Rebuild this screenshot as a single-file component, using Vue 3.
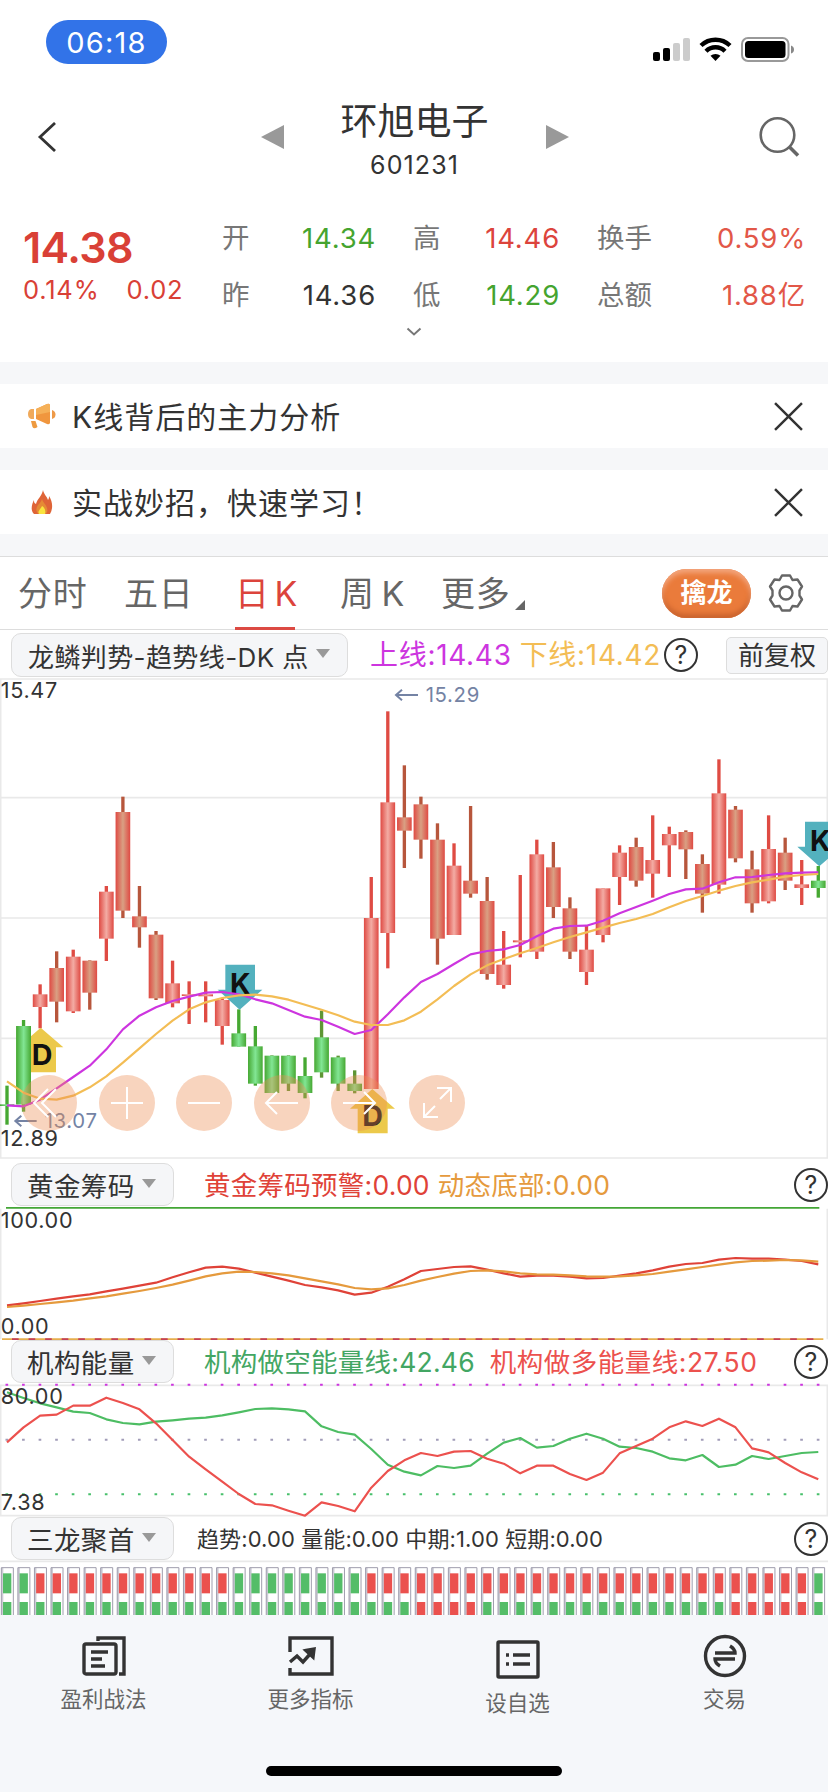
<template>
  <div class="stock-page">
    <!-- 状态栏 -->
    <div class="status-bar">
      <span class="time">06:18</span>
      <svg class="status-icons" viewBox="0 0 142 30">
        <rect x="1" y="17" width="7" height="9" rx="2" />
        <rect x="11" y="13" width="7" height="13" rx="2" />
        <rect x="21" y="8" width="7" height="18" rx="2" fill="#ccc" />
        <rect x="31" y="3" width="7" height="23" rx="2" fill="#ccc" />
        <g fill="none" stroke="#000" stroke-width="4.400">
          <path d="M49 10.500a21 21 0 0 1 29 0" />
          <path d="M54 16.200a13.500 13.500 0 0 1 19 0" />
        </g>
        <path d="M63.500 26l-5-5.200a7.500 7.500 0 0 1 10 0z" />
        <rect x="90" y="3" width="46.500" height="23" rx="6" fill="none" stroke="#999" stroke-width="2" />
        <rect x="93" y="6" width="40.500" height="17" rx="3.500" />
        <path d="M139 10.500q3 1 3 4t-3 4z" fill="#888" />
      </svg>
    </div>

    <!-- 股票名称 -->
    <header class="nav-bar">
      <svg class="back" viewBox="0 0 20 30"><path d="M18 1L3 15l15 14" /></svg>
      <div class="stock-switch">
        <i class="arrow-left"></i>
        <div class="stock-title">
          <h1>环旭电子</h1>
          <span>601231</span>
        </div>
        <i class="arrow-right"></i>
      </div>
      <svg class="search" viewBox="0 0 42 42">
        <circle cx="19.500" cy="19" r="16.800" />
        <path d="M31.500 31l8.500 8.500" stroke-width="3.600" />
      </svg>
    </header>

    <!-- 行情 -->
    <section class="quote">
      <div class="price">
        <strong>14.38</strong>
        <div class="change"><span>0.14%</span><span>0.02</span></div>
      </div>
      <div class="quote-grid">
        <template v-for="q in quotes" :key="q.label">
          <span class="label">{{ q.label }}</span>
          <span class="value" :class="q.cls">{{ q.value }}</span>
        </template>
      </div>
      <svg class="expand" viewBox="0 0 16 9"><path d="M1.500 1.500L8 7.500l6.500-6" /></svg>
    </section>

    <!-- 提示条 -->
    <div class="notice" v-for="n in notices" :key="n.text">
      <svg v-if="n.icon === 'horn'" class="notice-icon" viewBox="0 0 28 28">
        <path d="M6 7v10H3q-3-1-3-5t3-5z" fill="#f0a95a" />
        <path d="M8 7L19 2q3-1 3 1.500v17q0 2.500-3 1.500L8 17z" fill="#f0963e" />
        <path d="M8 7L19 2q3-1 3 1.500V10L8 13z" fill="#f5b058" />
        <path d="M3 19h4.500l2 6q-3.500 2.500-5 0z" fill="#ee9a40" />
        <path d="M24 8q3.500 1 3.500 4.500T24 17z" fill="#ee9a48" />
      </svg>
      <svg v-else class="notice-icon" viewBox="0 0 28 28">
        <path d="M15 2c1 5 4 6 5 10 1-1 1-3 1-4 4 6 4 13 1 18H6c-4-4-2-10 0-14 0 2 0 3 2 4 1-5 6-8 7-14z" fill="#df6437" />
        <path d="M14 11c1 4 4 5 5 9 1 3 0 6-2 6h-6c-3-1-3-5-2-7 1-3 4-4 5-8z" fill="#e58a35" />
        <path d="M14 18c3 2 4 5 3 8h-6c-2-3 2-5 3-8z" fill="#f9e43e" />
      </svg>
      <span>{{ n.text }}</span>
      <svg class="close" viewBox="0 0 28 28"><path d="M1 1l26 26M27 1L1 27" /></svg>
    </div>

    <!-- 周期切换 -->
    <nav class="tabs">
      <span v-for="t in tabs" :key="t" class="tab" :class="{ active: t === '日 K' }">{{ t }}</span>
      <span class="tab">更多</span>
      <i class="corner"></i>
      <button class="dragon-btn">擒龙</button>
      <svg class="gear" viewBox="0 0 40 40">
        <path d="M16 2.500h8l2.500 4.500 5-.500 4.500 7-2.500 4v5l2.500 4-4.500 7-5-.500-2.500 4.500h-8L13.500 33l-5 .500-4.500-7 2.500-4v-5L4 13.500l4.500-7 5 .500z" />
        <circle cx="20" cy="20" r="6.500" />
      </svg>
    </nav>

    <!-- K线主图 -->
    <div class="panel-head main-head">
      <button class="picker">龙鳞判势-趋势线-DK 点<i></i></button>
      <span class="ind up-line">上线:14.43</span>
      <span class="ind down-line">下线:14.42</span>
      <span class="help">?</span>
      <button class="fuquan">前复权</button>
    </div>
    <div class="k-chart">
      <svg viewBox="0 24 2484 1446">
        <defs>
          <linearGradient id="bodyRed">
            <stop offset="0" stop-color="#df4a43" />
            <stop offset=".5" stop-color="#f3aca4" />
            <stop offset="1" stop-color="#df4a43" />
          </linearGradient>
          <linearGradient id="bodyBrown">
            <stop offset="0" stop-color="#df4a43" />
            <stop offset=".5" stop-color="#d9a083" />
            <stop offset="1" stop-color="#df4a43" />
          </linearGradient>
          <linearGradient id="bodyGreen">
            <stop offset="0" stop-color="#46a832" />
            <stop offset=".5" stop-color="#82e694" />
            <stop offset="1" stop-color="#46a832" />
          </linearGradient>
        </defs>
        <path class="grid" d="M2 27H2482V1464H2zM0 383H2484M0 744H2484M0 1105H2484" />
        <g v-for="(c, i) in candles" :key="i">
          <rect :x="cx(i) - 5" :y="c[0]" width="10" :height="c[3] - c[0]" :fill="wick[c[4]]" />
          <rect :x="cx(i) - 22" :y="c[1]" width="44" :height="c[2] - c[1]" :fill="body[c[4]]" />
        </g>
        <!-- DK 标记 -->
        <path d="M122 1073l68 59h-22v75H78v-75H55z" fill="#ecc94a" />
        <rect x="49" y="1068" width="44" height="235" fill="url(#bodyGreen)" />
        <path d="M307 1257l68 59h-22v74h-90v-74h-23z" transform="translate(810)" fill="#ecc94a" />
        <path d="M676 884h89v75h22l-68 60-66-60h23z" fill="#53b1be" />
        <path d="M2415 455h89v75h22l-68 59-66-59h23z" fill="#53b1be" />
        <g class="mark">
          <text x="126" y="1185">D</text>
          <text x="1118" y="1369">D</text>
          <text x="721" y="971">K</text>
          <text x="2461" y="542">K</text>
        </g>
        <polyline class="line" :points="points(upLine)" stroke="#cd35df" />
        <polyline class="line" :points="points(downLine)" stroke="#f3bd55" />
        <g class="price-mark">
          <path d="M1254 75h-66m18-16l-18 16 18 16" />
          <text x="1277" y="96">15.29</text>
          <path d="M110 1353H46m18-16l-18 16 18 16" />
          <text x="134" y="1373">13.07</text>
        </g>
        <g class="axis">
          <text x="2" y="85">15.47</text>
          <text x="2" y="1429">12.89</text>
        </g>
      </svg>
      <div class="tools">
        <svg v-for="(d, i) in tools" :key="i" viewBox="0 0 56 56"><path :d="d" /></svg>
      </div>
    </div>

    <!-- 黄金筹码 -->
    <div class="panel-head">
      <button class="picker small">黄金筹码<i></i></button>
      <span class="ind red">黄金筹码预警:0.00</span>
      <span class="ind orange">动态底部:0.00</span>
      <span class="help">?</span>
    </div>
    <svg class="sub-chart" viewBox="0 171 2484 399">
      <path class="grid" d="M2 176V568M2482 176V568" />
      <path d="M18 173.500H2458" stroke="#43a636" stroke-width="5" />
      <path d="M6 567.500H2470" stroke="#e6ae4c" stroke-width="5" />
      <path d="M36 567.500H2450" stroke="#c44058" stroke-width="5" stroke-dasharray="20 29.670" />
      <polyline class="line" :points="points(warnLine)" stroke="#df4238" />
      <polyline class="line" :points="points(bottomLine)" stroke="#e59a3d" />
      <g class="axis">
        <text x="2" y="234">100.00</text>
        <text x="2" y="551">0.00</text>
      </g>
    </svg>

    <!-- 机构能量 -->
    <div class="panel-head tight">
      <button class="picker small">机构能量<i></i></button>
      <span class="ind green">机构做空能量线:42.46</span>
      <span class="ind long">机构做多能量线:27.50</span>
      <span class="help">?</span>
    </div>
    <svg class="sub-chart energy" viewBox="0 9 2484 402">
      <path class="grid" d="M2 16H2482V407H2z" />
      <path class="dots" d="M16.500 14.500H2470" stroke="#cd35df" />
      <path class="dots" d="M16.500 179H2470" stroke="#a19cb8" />
      <path class="dots" d="M16.500 343H2470" stroke="#47c06b" />
      <polyline class="line" :points="points(shortLine)" stroke="#4dbd63" />
      <polyline class="line" :points="points(longLine)" stroke="#ec514e" />
      <g class="axis">
        <text x="2" y="73">80.00</text>
        <text x="2" y="391">7.38</text>
      </g>
    </svg>

    <!-- 三龙聚首 -->
    <div class="panel-head tight">
      <button class="picker small">三龙聚首<i></i></button>
      <span class="ind tiny">趋势:0.00 量能:0.00 中期:1.00 短期:0.00</span>
      <span class="help">?</span>
    </div>
    <svg class="bar-chart" viewBox="0 540 2484 165">
      <path class="grid" d="M0 544H2484" />
      <g v-for="i in 50" :key="i">
        <path :d="`M${cx(i - 1) - 14} 563v150`" stroke="#cdccd6" stroke-width="6" />
        <path :d="`M${cx(i - 1) - 17} 710V563H${cx(i - 1) + 19}V710`" fill="none" stroke="#9f9dad" stroke-width="3" />
        <rect :x="cx(i - 1) - 12" y="580" width="25" height="60" :fill="barColor(topBars, i - 1)" />
        <rect :x="cx(i - 1) - 12" y="666" width="25" height="60" :fill="barColor(lowBars, i - 1)" />
      </g>
    </svg>

    <!-- 底部菜单 -->
    <footer class="bottom">
      <div class="menu">
        <div class="menu-item">
          <svg viewBox="0 0 48 48">
            <rect x="4" y="12" width="32" height="30" rx="2" />
            <path d="M18 9V6h26v36h-5M11 20h17M11 27h11M11 34h14" />
          </svg>
          <span>盈利战法</span>
        </div>
        <div class="menu-item">
          <svg viewBox="0 0 48 48">
            <path d="M3 20V6h42v36H3v-6M3 30l7-6 6 6 8-9" />
            <path d="M19 18.500l8-1.500-1 8z" fill="#333" />
          </svg>
          <span>更多指标</span>
        </div>
        <div class="menu-item low">
          <svg viewBox="0 0 48 48">
            <rect x="4" y="6" width="40" height="35" rx="1" />
            <path d="M19 19h17M19 28h17M12 19h3M12 28h3" />
          </svg>
          <span>设自选</span>
        </div>
        <div class="menu-item">
          <svg viewBox="0 0 48 48">
            <circle cx="24" cy="24" r="19.500" />
            <path d="M14 21h20q0-4-5-7M34 27H14q0 4 5 7" />
          </svg>
          <span>交易</span>
        </div>
      </div>
      <div class="home-bar"></div>
    </footer>
  </div>
</template>

<script setup>
const quotes = [
  { label: '开', value: '14.34', cls: 'down' },
  { label: '高', value: '14.46', cls: 'up' },
  { label: '换手', value: '0.59%', cls: 'warm' },
  { label: '昨', value: '14.36', cls: '' },
  { label: '低', value: '14.29', cls: 'down' },
  { label: '总额', value: '1.88亿', cls: 'warm' }
];

const notices = [
  { icon: 'horn', text: 'K线背后的主力分析' },
  { icon: 'fire', text: '实战妙招，快速学习！' }
];

const tabs = ['分时', '五日', '日 K', '周 K'];

// 图表工具按钮：快退、放大、缩小、左移、右移、全屏
const tools = [
  'M27 14L13 28l14 14M35 14L21 28l14 14',
  'M12 28h32M28 12v32',
  'M12 28h32',
  'M44 28H12M23 17L12 28l11 11',
  'M12 28h32M33 17l11 11-11 11',
  'M28 13h14v14M42 13L31 24M15 28v14h14M15 42l11-11'
];

const wick = { r: '#df4b43', b: '#b7563c', g: '#46a832', d: '#5e9634' };
const body = { r: 'url(#bodyRed)', b: 'url(#bodyBrown)', g: 'url(#bodyGreen)', d: 'url(#bodyGreen)' };

// 每根K线：最高、实体上沿、实体下沿、最低、颜色
const candles = [
  [1247, 1303, 1308, 1364, 'g'], [1050, 1068, 1303, 1325, 'g'], [943, 973, 1011, 1075, 'r'],
  [844, 894, 995, 1057, 'b'], [839, 860, 1024, 1029, 'r'], [871, 872, 968, 1019, 'b'],
  [648, 665, 806, 873, 'r'], [380, 426, 722, 744, 'b'], [648, 739, 772, 833, 'b'],
  [783, 794, 985, 990, 'b'], [872, 940, 1000, 1012, 'r'], [934, 973, 978, 1062, 'r'],
  [934, 973, 979, 1057, 'r'], [985, 990, 1068, 1124, 'r'], [1018, 1090, 1130, 1130, 'g'],
  [1068, 1129, 1241, 1247, 'g'], [1156, 1157, 1269, 1269, 'd'], [1156, 1157, 1241, 1263, 'd'],
  [1162, 1218, 1269, 1285, 'g'], [1022, 1102, 1207, 1223, 'd'], [1157, 1162, 1241, 1263, 'd'],
  [1201, 1241, 1263, 1270, 'd'], [621, 744, 1257, 1257, 'r'], [124, 397, 789, 895, 'r'],
  [286, 442, 482, 594, 'b'], [380, 403, 509, 566, 'b'], [460, 509, 806, 884, 'b'],
  [520, 587, 795, 795, 'r'], [408, 632, 671, 683, 'b'], [621, 693, 912, 929, 'b'],
  [783, 884, 945, 956, 'r'], [615, 811, 817, 862, 'r'], [509, 553, 845, 867, 'r'],
  [516, 592, 711, 744, 'b'], [682, 715, 845, 867, 'b'], [766, 839, 906, 945, 'r'],
  [655, 655, 795, 817, 'r'], [526, 548, 621, 705, 'r'], [503, 531, 632, 650, 'b'],
  [436, 570, 611, 683, 'r'], [470, 492, 526, 621, 'r'], [481, 486, 538, 627, 'b'],
  [553, 582, 671, 728, 'b'], [268, 370, 644, 671, 'r'], [408, 419, 565, 577, 'b'],
  [542, 598, 700, 728, 'b'], [436, 537, 694, 700, 'r'], [503, 548, 632, 660, 'b'],
  [570, 643, 654, 705, 'r'], [588, 632, 654, 683, 'g']
];

const upLine = [
  1306, 1309, 1289, 1255, 1221, 1187, 1138, 1078, 1037, 1012, 993, 980, 968, 966, 973, 988, 1000,
  1020, 1040, 1050, 1070, 1092, 1080, 1033, 982, 936, 912, 882, 853, 843, 838, 825, 799, 776, 768,
  767, 752, 730, 711, 692, 672, 658, 656, 637, 622, 621, 615, 610, 608, 607
];
const downLine = [
  1234, 1268, 1286, 1289, 1277, 1252, 1219, 1178, 1135, 1092, 1052, 1018, 997, 984, 976, 974, 979,
  989, 1004, 1019, 1036, 1055, 1065, 1065, 1051, 1025, 988, 948, 913, 886, 867, 850, 834, 817, 801,
  787, 773, 759, 747, 732, 712, 693, 678, 662, 648, 637, 629, 620, 615, 612
];
const warnLine = [
  466, 460, 453, 446, 439, 433, 424, 416, 407, 398, 382, 367, 353, 350, 356, 368, 380, 392, 405,
  412, 421, 434, 428, 410, 388, 363, 357, 351, 349, 359, 370, 380, 377, 377, 380, 385, 384, 377,
  370, 361, 350, 342, 339, 329, 324, 326, 326, 329, 333, 343
];
const bottomLine = [
  471, 467, 462, 457, 452, 445, 439, 431, 423, 414, 404, 392, 379, 370, 365, 366, 370, 376, 385,
  394, 403, 414, 418, 415, 405, 392, 381, 371, 363, 361, 364, 370, 373, 374, 376, 379, 380, 379,
  376, 372, 365, 358, 351, 344, 337, 333, 332, 330, 331, 335
];
const shortLine = [
  37, 54, 70, 82, 95, 99, 118, 129, 133, 125, 121, 116, 113, 106, 97, 87, 85, 88, 94, 139, 156,
  164, 207, 254, 275, 286, 258, 264, 257, 221, 188, 174, 203, 198, 176, 161, 176, 200, 204, 215,
  235, 241, 225, 261, 254, 228, 237, 228, 219, 216
];
const longLine = [
  187, 142, 107, 104, 77, 77, 53, 69, 88, 130, 180, 230, 268, 305, 342, 372, 376, 392, 407, 367,
  378, 394, 323, 273, 241, 219, 228, 215, 213, 236, 251, 280, 257, 257, 282, 300, 278, 220, 198,
  176, 142, 124, 138, 116, 142, 205, 217, 249, 277, 298
];

// 红色柱子所在的区间
const topBars = [[2, 13], [22, 48]];
const lowBars = [[25, 28], [44, 48]];

const cx = (i) => 21 + i * 49.67;
const points = (list) => list.map((y, i) => `${cx(i)},${y}`).join(' ');
const barColor = (ranges, i) => (ranges.some(([a, b]) => i >= a && i <= b) ? '#eb514e' : '#54bd68');
</script>

<style>
body {
  background: #fff;
}
</style>

<style scoped>
.stock-page {
  width: 828px;
  height: 1792px;
  overflow: hidden;
  display: flex;
  flex-direction: column;
  background: #fff;
  color: #333;
  font-family: Inter, "Noto Sans CJK SC", sans-serif;
}

.stock-page > * {
  flex-shrink: 0;
  box-sizing: border-box;
}

svg {
  display: block;
}

button {
  font-family: inherit;
  color: inherit;
  margin: 0;
  box-sizing: border-box;
}

/* 状态栏 */
.status-bar {
  height: 88px;
  padding: 20px 34px 0 46px;
  display: flex;
  justify-content: space-between;
}

.time {
  width: 121px;
  height: 44px;
  border-radius: 22px;
  background: #3273e8;
  color: #fff;
  font-size: 29px;
  letter-spacing: 1.2px;
  line-height: 45px;
  text-align: center;
}

.status-icons {
  width: 142px;
  height: 30px;
  margin-top: 15px;
}

/* 标题栏 */
.nav-bar {
  height: 120px;
  padding: 0 28px 0 37px;
  display: flex;
  align-items: flex-start;
  justify-content: space-between;
}

.back {
  width: 20px;
  height: 30px;
  margin-top: 34px;
  fill: none;
  stroke: #333;
  stroke-width: 2.8;
}

.stock-switch {
  display: flex;
  width: 308px;
  justify-content: space-between;
  margin-left: 14px;
}

.arrow-left,
.arrow-right {
  border: 12px solid transparent;
  height: 0;
  margin-top: 37px;
}

.arrow-left {
  border-left: 0;
  border-right: 23px solid #999;
}

.arrow-right {
  border-right: 0;
  border-left: 23px solid #999;
}

.stock-title {
  text-align: center;
}

.stock-title h1 {
  margin: 6px 0 0;
  font-size: 37px;
  line-height: 56px;
  font-weight: 400;
}

.stock-title span {
  display: block;
  font-size: 25px;
  line-height: 31px;
  letter-spacing: 1.1px;
}

.search {
  width: 42px;
  height: 42px;
  margin-top: 28px;
  fill: none;
  stroke: #666;
  stroke-width: 2.6;
}

/* 行情 */
.quote {
  height: 154px;
  padding: 0 22px 0 23px;
  display: grid;
  grid-template-columns: 199px 1fr;
  grid-template-rows: 118px 20px;
}

.price strong {
  display: block;
  margin-top: 11px;
  font-size: 43px;
  line-height: 56px;
  font-weight: 600;
  letter-spacing: -0.6px;
  color: #d94036;
}

.change {
  display: flex;
  gap: 27px;
  font-size: 25.5px;
  line-height: 30px;
  letter-spacing: 0.8px;
  color: #d94036;
}

.quote-grid {
  display: grid;
  grid-template-columns: 40px 114px 80px 104px 110px 1fr;
  grid-template-rows: 57px 57px;
  align-items: center;
  font-size: 27.5px;
  line-height: 57px;
  padding-top: 2px;
}

.label {
  color: #777;
}

.label:nth-child(6n + 3),
.label:nth-child(6n + 5) {
  padding-left: 37px;
}

.value {
  text-align: right;
  letter-spacing: 0.8px;
}

.value.up {
  color: #dc443c;
}

.value.down {
  color: #45a42f;
}

.value.warm {
  color: #e25748;
}

.expand {
  grid-column: 1 / 3;
  width: 16px;
  height: 9px;
  margin: 1px 0 0 383px;
  fill: none;
  stroke: #777;
  stroke-width: 2;
}

/* 提示条 */
.notice {
  height: 86px;
  border-top: 22px solid #f6f7f9;
  padding: 0 25px 0 28px;
  display: flex;
  align-items: center;
  font-size: 30px;
}

.notice-icon {
  width: 28px;
  height: 28px;
  margin-right: 16px;
}

.notice span {
  flex: 1;
  padding-bottom: 2px;
  letter-spacing: 1px;
}

.close {
  width: 29px;
  height: 29px;
  fill: none;
  stroke: #333;
  stroke-width: 2.4;
}

/* 周期切换 */
.tabs {
  height: 96px;
  border-top: 22px solid #f6f7f9;
  padding: 0 22px 0 18px;
  display: flex;
  align-items: center;
  font-size: 34px;
  color: #666;
  box-shadow: inset 0 1px #ddd, inset 0 -1px #ddd;
}

.tab {
  width: 70px;
  height: 74px;
  box-sizing: border-box;
  margin-right: 36px;
  padding-top: 2px;
  line-height: 72px;
  letter-spacing: 0.8px;
  white-space: nowrap;
}

.tab:nth-child(2) {
  margin-right: 41px;
}

.tab:nth-child(3) {
  width: 60px;
  margin-right: 45px;
  letter-spacing: 0;
  word-spacing: -4px;
}

.tab:nth-child(4) {
  width: 64px;
  margin-right: 37px;
  letter-spacing: 0;
  word-spacing: -2px;
}

.tab:nth-child(5) {
  margin-right: 4px;
}

.tab.active {
  color: #dc443c;
  border-bottom: 3px solid #dc4a43;
}

.corner {
  margin-top: 24px;
  border-left: 10px solid transparent;
  border-bottom: 10px solid #666;
}

.dragon-btn {
  width: 89px;
  height: 49px;
  margin-left: auto;
  padding: 0;
  border: 0;
  border-radius: 25px;
  background: #ea7b3b;
  box-shadow: inset 0 4px 5px #f3a57c, inset 0 -4px 5px #c9632e;
  color: #fff;
  font-size: 26px;
  line-height: 46px;
  font-weight: 700;
}

.gear {
  width: 40px;
  height: 40px;
  margin-left: 15px;
  fill: none;
  stroke: #666;
  stroke-width: 2.4;
  stroke-linejoin: round;
}

/* 指标标题行 */
.panel-head {
  height: 47px;
  padding: 3px 0 0 11px;
  display: flex;
  align-items: flex-start;
  font-size: 26.5px;
  line-height: 45px;
  letter-spacing: 0.25px;
  white-space: nowrap;
}

.panel-head.tight {
  height: 43px;
  padding-top: 0;
}

.main-head {
  height: 48px;
}

.main-head .ind {
  font-size: 28px;
  letter-spacing: 0.7px;
}

.picker {
  width: 337px;
  height: 44px;
  padding: 0 17px 0 16px;
  display: flex;
  align-items: center;
  justify-content: space-between;
  border: 1px solid #ddd;
  border-radius: 10px;
  background: #f5f6f8;
  font-size: 26px;
  letter-spacing: 0.4px;
}

.picker i {
  margin-bottom: 3px;
  border: 7px solid transparent;
  border-top: 9px solid #999;
  border-bottom: 0;
}

.picker.small {
  width: 163px;
  height: 43px;
  margin-right: 30px;
  padding-left: 15px;
  font-size: 26.5px;
}

.ind + .ind {
  margin-left: 8px;
}

.up-line {
  margin-left: 22px;
  color: #cd35df;
}

.down-line {
  color: #f3bd55;
}

.red {
  color: #df4238;
}

.orange {
  color: #e59a3d;
}

.green {
  color: #43a663;
}

.ind.long {
  margin-left: 15px;
  letter-spacing: 0.5px;
  color: #ec514e;
}

.ind.tiny {
  margin-left: -7px;
  font-size: 22px;
  letter-spacing: 0.1px;
}

.help {
  width: 34px;
  height: 34px;
  box-sizing: border-box;
  margin: 5px 0 0 auto;
  border: 2px solid #333;
  border-radius: 50%;
  font-size: 25px;
  line-height: 30px;
  text-align: center;
}

.main-head .help {
  margin-left: 3px;
}

.fuquan {
  width: 102px;
  height: 37px;
  margin: 4px 0 0 auto;
  padding: 0;
  border: 1px solid #ddd;
  border-radius: 5px;
  background: #f5f6f8;
  font-size: 26px;
  line-height: 34px;
}

/* 图表 */
.k-chart {
  position: relative;
  height: 482px;
}

.k-chart > svg {
  width: 828px;
  height: 482px;
}

.grid {
  fill: none;
  stroke: #e9e9e9;
  stroke-width: 5;
}

.line {
  fill: none;
  stroke-width: 6.5;
  stroke-linejoin: round;
}

.dots {
  stroke-width: 6;
  stroke-dasharray: 8 41.67;
}

.axis text {
  font-size: 65px;
  letter-spacing: 2px;
  fill: #333;
}

.mark text {
  font-size: 86px;
  font-weight: 700;
  text-anchor: middle;
  fill: #111;
}

.price-mark path {
  fill: none;
  stroke: #7483a4;
  stroke-width: 6;
}

.price-mark text {
  font-size: 61px;
  letter-spacing: 2px;
  fill: #7483a4;
}

.tools {
  position: absolute;
  left: 21px;
  top: 397px;
  display: flex;
  gap: 21.5px;
}

.tools svg {
  width: 56px;
  height: 56px;
  border-radius: 50%;
  background: rgba(236, 143, 84, 0.38);
  fill: none;
  stroke: #fff;
  stroke-width: 2;
}

.sub-chart {
  width: 828px;
  height: 133px;
}

.energy {
  height: 134px;
}

.bar-chart {
  width: 828px;
  height: 55px;
}

/* 底部 */
.bottom {
  flex: 1;
  background: #f5f7fa;
  padding-top: 17px;
}

.menu {
  display: grid;
  grid-template-columns: repeat(4, 207px);
}

.menu-item {
  display: flex;
  flex-direction: column;
  align-items: center;
  font-size: 21.5px;
  line-height: 30px;
  color: #666;
}

.menu-item svg {
  width: 48px;
  height: 48px;
  margin-bottom: 4px;
  fill: none;
  stroke: #333;
  stroke-width: 3.4;
}

.menu-item.low {
  padding-top: 4px;
}

.home-bar {
  width: 296px;
  height: 10px;
  margin: 48px auto 0;
  border-radius: 5px;
  background: #000;
}
</style>
